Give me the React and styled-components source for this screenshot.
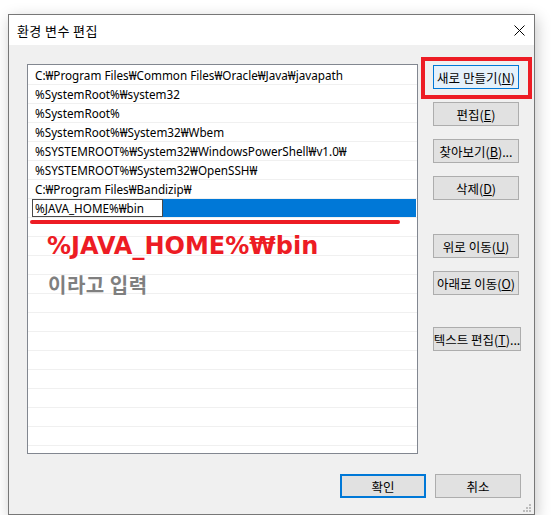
import styled, { createGlobalStyle } from 'styled-components'

const GlobalStyle = createGlobalStyle`
    html, body {
        margin: 0;
        background: #ffffff;
    }
    body {
        font-family: "Noto Sans", "Noto Sans CJK KR", sans-serif;
        color: #000000;
    }
`

const Pagina = styled.div`
    padding: 14px 0 0 8px;
`

const Janela = styled.div`
    position: relative;
    box-sizing: border-box;
    width: 527px;
    height: 501px;
    border: 1px solid #777777;
    background: #f0f0f0;
    box-shadow: 2px 4px 14px rgba(0, 0, 0, 0.22);
    display: flex;
    flex-direction: column;
`

const BarraTitulo = styled.div`
    height: 30px;
    background: #ffffff;
    display: flex;
    align-items: center;
    justify-content: space-between;
    padding: 0 9px 0 8px;
    font-family: "Noto Sans CJK KR", sans-serif;
    font-size: 13px;
    letter-spacing: 0.4px;
`

const Corpo = styled.div`
    flex: 1;
    display: flex;
    flex-direction: column;
    padding: 19px 13px 0 18px;
`

const Principal = styled.div`
    display: flex;
    gap: 15px;
`

const Lista = styled.div`
    box-sizing: border-box;
    width: 392px;
    height: 390px;
    border: 1px solid #828790;
    background: #ffffff;
    padding-top: 1px;
    overflow: hidden;
`

const Linha = styled.div`
    height: 18px;
    border-bottom: 1px solid #f0f0f0;
    display: flex;
    align-items: center;
    padding-left: 7px;
    font-size: 11.7px;
    white-space: nowrap;
`

const LinhaSelecionada = styled.div`
    height: 18px;
    border-bottom: 1px solid #f0f0f0;
    display: flex;
    padding-left: 4px;
    padding-right: 1px;
`

const CaixaEdicao = styled.div`
    box-sizing: border-box;
    width: 131px;
    height: 18px;
    border: 1px solid #4a4a4a;
    background: #ffffff;
    padding-left: 2px;
    font-size: 11.7px;
    line-height: 16px;
    white-space: nowrap;
`

const Destaque = styled.div`
    flex: 1;
    background: #0078d7;
`

const ColunaBotoes = styled.div`
    display: flex;
    flex-direction: column;
    padding-top: 1px;
`

const Botao = styled.button`
    box-sizing: border-box;
    width: ${p => p.$largura || 86}px;
    height: 24px;
    margin-top: ${p => p.$espaco || 0}px;
    padding: 0;
    background: ${p => p.$foco ? '#e5f1fb' : '#e1e1e1'};
    border: ${p => p.$padrao ? '2px' : '1px'} solid ${p => (p.$foco || p.$padrao) ? '#0078d7' : '#adadad'};
    font-family: "Noto Sans CJK KR", sans-serif;
    font-size: 12.5px;
    color: #000000;
    white-space: nowrap;
    display: flex;
    align-items: center;
    justify-content: center;

    u {
        text-underline-offset: 1px;
    }
`

const Rodape = styled.div`
    display: flex;
    justify-content: flex-end;
    gap: 9px;
    margin-top: 20px;
`

const MarcaVermelha = styled.div`
    position: absolute;
    left: 412px;
    top: 42px;
    width: 111px;
    height: 42px;
    box-sizing: border-box;
    border: 4px solid #ed1c24;
    pointer-events: none;
`

const Sublinhado = styled.div`
    position: absolute;
    left: 21px;
    top: 205px;
    width: 370px;
    height: 4px;
    border-radius: 2px;
    background: #ed1c24;
`

const Anotacao = styled.div`
    position: absolute;
    left: 38px;
    top: 219px;
    display: flex;
    flex-direction: column;
    gap: 17px;
`

const AnotacaoCaminho = styled.div`
    font-family: "DejaVu Sans", sans-serif;
    font-weight: bold;
    font-size: 24px;
    line-height: 24px;
    color: #ed1c24;
`

const AnotacaoTexto = styled.div`
    font-family: "Noto Sans CJK KR", sans-serif;
    font-weight: bold;
    font-size: 20px;
    line-height: 20px;
    color: #7f7f7f;
    padding-left: 1px;
    letter-spacing: 0.5px;
`

const Alca = styled.svg`
    position: absolute;
    right: 2px;
    bottom: 1px;
`

const caminhos = [
    'C:₩Program Files₩Common Files₩Oracle₩Java₩javapath',
    '%SystemRoot%₩system32',
    '%SystemRoot%',
    '%SystemRoot%₩System32₩Wbem',
    '%SYSTEMROOT%₩System32₩WindowsPowerShell₩v1.0₩',
    '%SYSTEMROOT%₩System32₩OpenSSH₩',
    'C:₩Program Files₩Bandizip₩',
]

const botoes = [
    { texto: '새로 만들기', tecla: 'N', foco: true },
    { texto: '편집', tecla: 'E', espaco: 13 },
    { texto: '찾아보기', tecla: 'B', resto: '...', espaco: 13 },
    { texto: '삭제', tecla: 'D', espaco: 13 },
    { texto: '위로 이동', tecla: 'U', espaco: 34 },
    { texto: '아래로 이동', tecla: 'O', espaco: 13 },
    { texto: '텍스트 편집', tecla: 'T', resto: '...', espaco: 32, largura: 88 },
]

function App() {
    const vazias = Array.from({ length: 14 })

    return (
        <Pagina>
            <GlobalStyle />
            <Janela>
                <BarraTitulo>
                    <span>환경 변수 편집</span>
                    <svg width="11" height="11" viewBox="0 0 11 11">
                        <path d="M0.5 0.5 L10.5 10.5 M10.5 0.5 L0.5 10.5" stroke="#000" strokeWidth="1" />
                    </svg>
                </BarraTitulo>
                <Corpo>
                    <Principal>
                        <Lista>
                            { caminhos.map(caminho => (
                                <Linha key={caminho}>{caminho}</Linha>
                            )) }
                            <LinhaSelecionada>
                                <CaixaEdicao>%JAVA_HOME%₩bin</CaixaEdicao>
                                <Destaque />
                            </LinhaSelecionada>
                            { vazias.map((_, i) => <Linha key={i} />) }
                        </Lista>
                        <ColunaBotoes>
                            { botoes.map(b => (
                                <Botao key={b.tecla} $foco={b.foco} $espaco={b.espaco} $largura={b.largura}>
                                    {b.texto}(<u>{b.tecla}</u>){b.resto}
                                </Botao>
                            )) }
                        </ColunaBotoes>
                    </Principal>
                    <Rodape>
                        <Botao $padrao>확인</Botao>
                        <Botao>취소</Botao>
                    </Rodape>
                </Corpo>
                <MarcaVermelha />
                <Sublinhado />
                <Anotacao>
                    <AnotacaoCaminho>%JAVA_HOME%₩bin</AnotacaoCaminho>
                    <AnotacaoTexto>이라고 입력</AnotacaoTexto>
                </Anotacao>
                <Alca width="10" height="10" viewBox="0 0 10 10">
                    <g fill="#bcbcbc">
                        <rect x="7" y="1" width="2" height="2" />
                        <rect x="4" y="4" width="2" height="2" />
                        <rect x="7" y="4" width="2" height="2" />
                        <rect x="1" y="7" width="2" height="2" />
                        <rect x="4" y="7" width="2" height="2" />
                        <rect x="7" y="7" width="2" height="2" />
                    </g>
                </Alca>
            </Janela>
        </Pagina>
    )
}

export default App
